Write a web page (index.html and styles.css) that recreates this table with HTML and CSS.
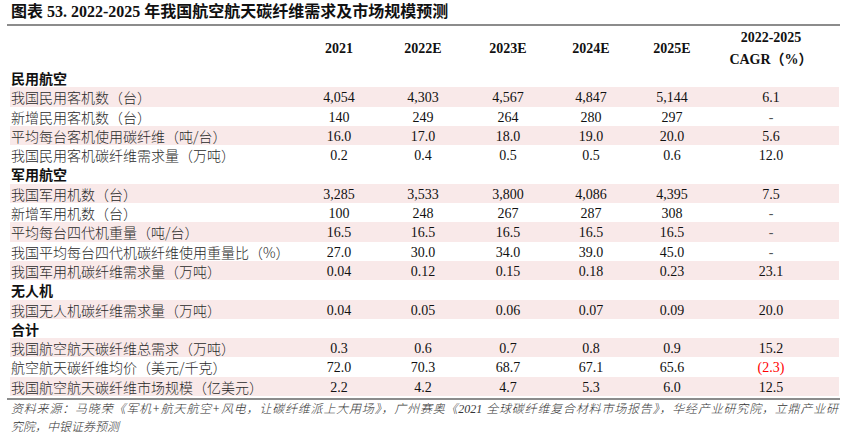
FILE: index.html
```html
<!DOCTYPE html>
<html lang="zh-CN">
<head>
<meta charset="utf-8">
<title>图表 53</title>
<link rel="stylesheet" href="styles.css">
</head>
<body>
<div class="page">
  <div class="title">图表 53. 2022-2025 年我国航空航天碳纤维需求及市场规模预测</div>
  <div class="table">
    <div class="row head">
      <div class="label"></div>
      <div class="num">2021</div>
      <div class="num">2022E</div>
      <div class="num">2023E</div>
      <div class="num">2024E</div>
      <div class="num">2025E</div>
      <div class="num last">2022-2025<br>CAGR（%）</div>
    </div>

    <div class="row section"><div class="label">民用航空</div></div>
    <div class="row alt"><div class="label">我国民用客机数（台）</div><div class="num">4,054</div><div class="num">4,303</div><div class="num">4,567</div><div class="num">4,847</div><div class="num">5,144</div><div class="num last">6.1</div></div>
    <div class="row"><div class="label">新增民用客机数（台）</div><div class="num">140</div><div class="num">249</div><div class="num">264</div><div class="num">280</div><div class="num">297</div><div class="num last dash">-</div></div>
    <div class="row alt"><div class="label">平均每台客机使用碳纤维（吨/台）</div><div class="num">16.0</div><div class="num">17.0</div><div class="num">18.0</div><div class="num">19.0</div><div class="num">20.0</div><div class="num last">5.6</div></div>
    <div class="row"><div class="label">我国民用客机碳纤维需求量（万吨）</div><div class="num">0.2</div><div class="num">0.4</div><div class="num">0.5</div><div class="num">0.5</div><div class="num">0.6</div><div class="num last">12.0</div></div>

    <div class="row section"><div class="label">军用航空</div></div>
    <div class="row alt"><div class="label">我国军用机数（台）</div><div class="num">3,285</div><div class="num">3,533</div><div class="num">3,800</div><div class="num">4,086</div><div class="num">4,395</div><div class="num last">7.5</div></div>
    <div class="row"><div class="label">新增军用机数（台）</div><div class="num">100</div><div class="num">248</div><div class="num">267</div><div class="num">287</div><div class="num">308</div><div class="num last dash">-</div></div>
    <div class="row alt"><div class="label">平均每台四代机重量（吨/台）</div><div class="num">16.5</div><div class="num">16.5</div><div class="num">16.5</div><div class="num">16.5</div><div class="num">16.5</div><div class="num last dash">-</div></div>
    <div class="row"><div class="label">我国平均每台四代机碳纤维使用重量比（%）</div><div class="num">27.0</div><div class="num">30.0</div><div class="num">34.0</div><div class="num">39.0</div><div class="num">45.0</div><div class="num last dash">-</div></div>
    <div class="row alt"><div class="label">我国军用机碳纤维需求量（万吨）</div><div class="num">0.04</div><div class="num">0.12</div><div class="num">0.15</div><div class="num">0.18</div><div class="num">0.23</div><div class="num last">23.1</div></div>

    <div class="row section"><div class="label">无人机</div></div>
    <div class="row alt"><div class="label">我国无人机碳纤维需求量（万吨）</div><div class="num">0.04</div><div class="num">0.05</div><div class="num">0.06</div><div class="num">0.07</div><div class="num">0.09</div><div class="num last">20.0</div></div>

    <div class="row section"><div class="label">合计</div></div>
    <div class="row alt"><div class="label">我国航空航天碳纤维总需求（万吨）</div><div class="num">0.3</div><div class="num">0.6</div><div class="num">0.7</div><div class="num">0.8</div><div class="num">0.9</div><div class="num last">15.2</div></div>
    <div class="row"><div class="label">航空航天碳纤维均价（美元/千克）</div><div class="num">72.0</div><div class="num">70.3</div><div class="num">68.7</div><div class="num">67.1</div><div class="num">65.6</div><div class="num last neg">(2.3)</div></div>
    <div class="row alt"><div class="label">我国航空航天碳纤维市场规模（亿美元）</div><div class="num">2.2</div><div class="num">4.2</div><div class="num">4.7</div><div class="num">5.3</div><div class="num">6.0</div><div class="num last">12.5</div></div>
  </div>
  <div class="source">
    <div class="source-line full">资料来源：马晓荣《军机+航天航空+风电，让碳纤维派上大用场》，广州赛奥《2021 全球碳纤维复合材料市场报告》，华经产业研究院，立鼎产业研</div>
    <div class="source-line">究院，中银证券预测</div>
  </div>
</div>
</body>
</html>
```

FILE: styles.css
```css
* { box-sizing: border-box; }

html, body {
  margin: 0;
  padding: 0;
  background: #ffffff;
}

body {
  font-family: "Liberation Serif", "Noto Sans CJK SC", serif;
  color: #111111;
}

.page {
  width: 848px;
  height: 438px;
  overflow: hidden;
}

.title {
  margin-left: 7px;
  width: 833px;
  height: 26px;
  padding-left: 4px;
  line-height: 24px;
  font-size: 16px;
  font-weight: bold;
  color: #111111;
  border-bottom: 2px solid #8c8c8c;
  white-space: nowrap;
}

.table {
  margin-left: 10px;
  width: 829px;
}

.row {
  display: grid;
  grid-template-columns: 287px 84px 84px 86px 80px 82px 126px;
  grid-template-rows: 19.3px;
  height: 19.3px;
  align-items: start;
}

.row.alt {
  background: #f9e9e9;
}

.label {
  font-family: "Noto Sans CJK SC", sans-serif;
  font-size: 14px;
  font-weight: 300;
  line-height: 19.3px;
  padding-top: 1px;
  padding-left: 1px;
  color: #2a2a2a;
  white-space: nowrap;
}

.num {
  font-family: "Liberation Serif", serif;
  font-size: 14px;
  line-height: 19.3px;
  padding-top: 1px;
  text-align: center;
  white-space: nowrap;
}

.num.last {
  padding-right: 10px;
}

.num.dash {
  color: #555555;
}

.num.neg {
  color: #ff0000;
}

.row.section .label {
  font-weight: bold;
  color: #111111;
}

.row.head {
  height: 42px;
  grid-template-rows: 38px;
  padding-top: 4px;
  align-items: center;
}

.row.head .num {
  font-family: "Liberation Serif", "Noto Sans CJK SC", serif;
  font-weight: bold;
  line-height: 22px;
  padding-top: 0;
}

.source {
  margin-left: 7px;
  width: 833px;
  margin-top: 2px;
  border-top: 2px solid #8c8c8c;
  padding-left: 4px;
  padding-right: 2px;
  font-family: "Liberation Serif", "Noto Sans CJK SC", serif;
  font-size: 12px;
  font-weight: 300;
  font-style: italic;
  line-height: 18px;
  color: #333333;
}

.source-line {
  white-space: nowrap;
}

.source-line.full {
  text-align: justify;
  text-align-last: justify;
  white-space: normal;
}
```
